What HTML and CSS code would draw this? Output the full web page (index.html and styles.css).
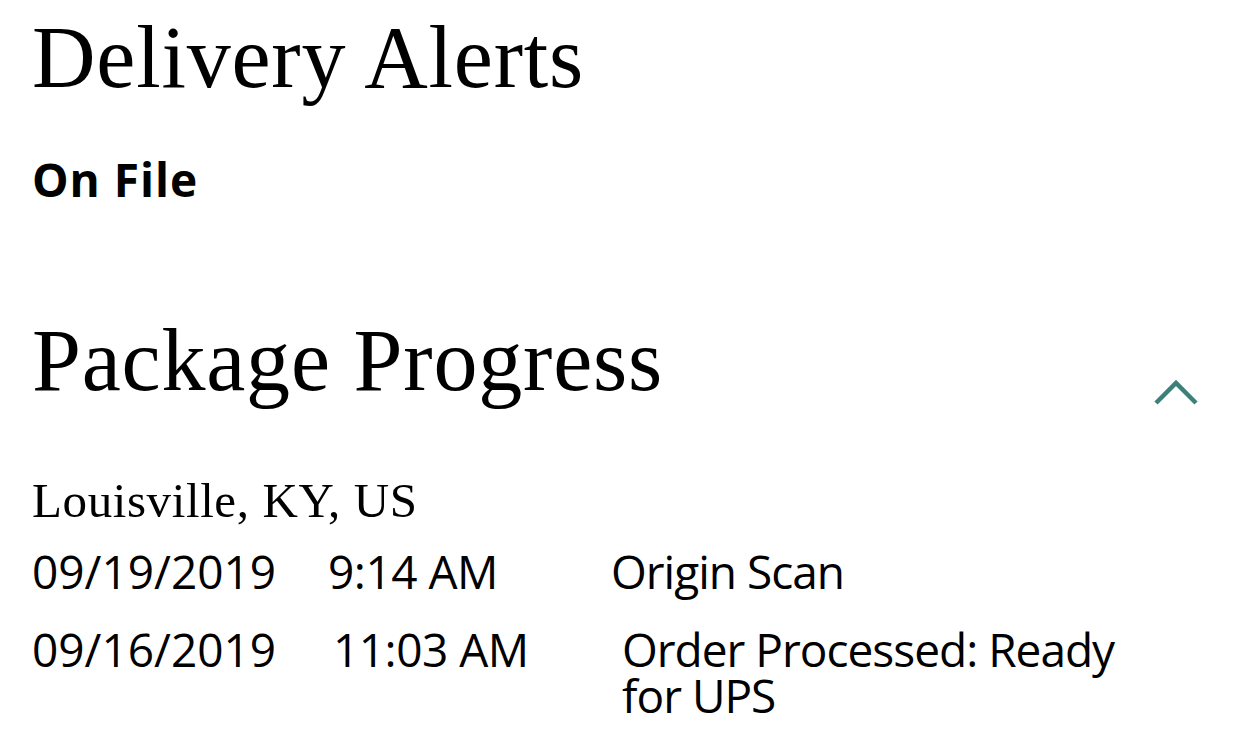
FILE: index.html
```html
<!DOCTYPE html>
<html lang="en">
<head>
<meta charset="utf-8">
<title>Delivery Alerts</title>
<link rel="stylesheet" href="styles.css">
</head>
<body>
<main class="page">
  <section class="alerts">
    <h1 class="heading">Delivery Alerts</h1>
    <p class="status">On File</p>
  </section>
  <section class="progress">
    <div class="progress-head">
      <h2 class="heading">Package Progress</h2>
      <button class="toggle" aria-label="Collapse">
        <svg width="46" height="28" viewBox="0 0 46 28" aria-hidden="true">
          <path d="M3 25 L23 5 L43 25" fill="none" stroke="#3b8178" stroke-width="4.5" stroke-linecap="butt" stroke-linejoin="miter"/>
        </svg>
      </button>
    </div>
    <p class="location">Louisville, KY, US</p>
    <div class="events">
      <div class="event">
        <span class="date">09/19/2019</span>
        <span class="time">9:14 AM</span>
        <span class="desc">Origin Scan</span>
      </div>
      <div class="event event--shifted">
        <span class="date">09/16/2019</span>
        <span class="time">11:03 AM</span>
        <span class="desc">Order Processed: Ready for UPS</span>
      </div>
    </div>
  </section>
</main>
</body>
</html>
```
FILE: styles.css
```css
html, body {
  margin: 0;
  padding: 0;
  background: #ffffff;
  color: #000000;
}

.page {
  padding: 14px 0 0 32px;
  box-sizing: border-box;
  width: 1242px;
}

.heading {
  margin: 0;
  font-family: "Liberation Serif", "Times New Roman", serif;
  font-weight: 400;
  font-size: 88px;
  line-height: 88px;
  letter-spacing: 0.8px;
}

.status {
  margin: 54px 0 0;
  font-family: "Open Sans", "Noto Sans", sans-serif;
  font-weight: 700;
  font-size: 46px;
  line-height: 46px;
  letter-spacing: 1px;
}

.progress {
  margin-top: 115px;
}

.progress-head {
  display: flex;
  justify-content: space-between;
  align-items: flex-end;
  padding-right: 43px;
}

.toggle {
  border: 0;
  background: none;
  padding: 0;
  margin: 0 0 -1px;
  display: flex;
}

.location {
  margin: 71px 0 0;
  font-family: "Liberation Serif", "Times New Roman", serif;
  font-size: 49px;
  line-height: 49px;
  letter-spacing: 0.6px;
}

.events {
  margin-top: 23px;
  display: flex;
  flex-direction: column;
  gap: 32px;
  font-family: "Open Sans", "Noto Sans", sans-serif;
  font-size: 46px;
  line-height: 46px;
}

.event {
  display: grid;
  grid-template-columns: 296px 283px 540px;
  align-items: start;
}

.time {
  letter-spacing: -0.5px;
}

.desc {
  letter-spacing: -1px;
}

.event--shifted .time {
  padding-left: 5px;
}

.event--shifted .desc {
  padding-left: 11px;
}
```
